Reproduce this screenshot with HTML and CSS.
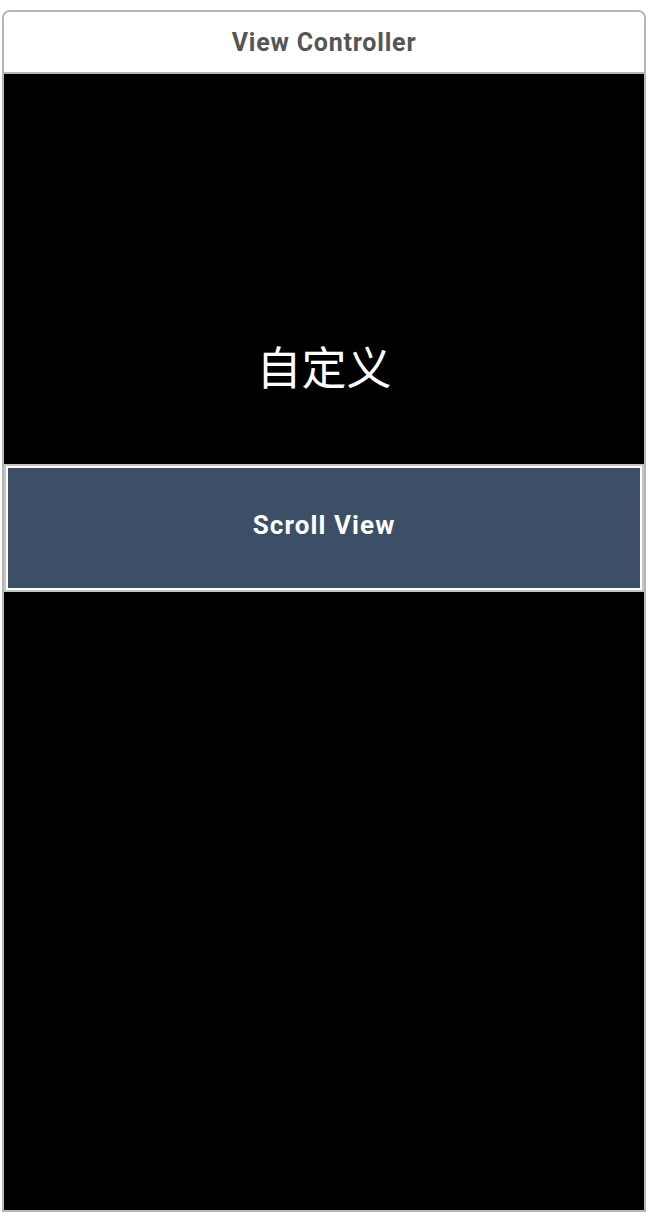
FILE: index.html
```html
<!DOCTYPE html>
<html>
<head>
<meta charset="utf-8">
<link rel="stylesheet" href="styles.css">
</head>
<body>
<div class="frame">
  <div class="header"><span class="title">View Controller</span></div>
  <div class="top-area"><span class="custom-label">自定义</span></div>
  <div class="scroll-view"><span class="scroll-label">Scroll View</span></div>
  <div class="bottom-area"></div>
</div>
</body>
</html>
```
FILE: styles.css
```css
html, body {
  margin: 0;
  padding: 0;
  background: #ffffff;
}
.frame {
  margin: 10px 2px 0 2px;
  width: 640px;
  border: 2px solid #b5b5b5;
  border-radius: 8px 8px 0 0;
  overflow: hidden;
  display: flex;
  flex-direction: column;
}
.header {
  height: 60px;
  background: #ffffff;
  border-bottom: 2px solid #b5b5b5;
  display: flex;
  align-items: center;
  justify-content: center;
}
.title {
  font-family: "Roboto", "Liberation Sans", sans-serif;
  font-weight: 700;
  font-size: 25px;
  letter-spacing: 0.8px;
  line-height: 30px;
  color: #555555;
  padding-top: 2px;
}
.top-area {
  height: 390px;
  background: #000000;
  display: flex;
  justify-content: center;
  align-items: flex-start;
  box-sizing: border-box;
  padding-top: 264px;
}
.custom-label {
  font-family: "Noto Sans CJK SC", sans-serif;
  font-size: 45px;
  line-height: 56px;
  color: #ffffff;
}
.scroll-view {
  height: 128px;
  box-sizing: border-box;
  background: #3c4f66;
  border: 2px solid #c4c4c4;
  box-shadow: inset 0 0 0 2px #ffffff;
  display: flex;
  align-items: center;
  justify-content: center;
  padding-bottom: 6px;
}
.scroll-label {
  font-family: "Roboto", "Liberation Sans", sans-serif;
  font-weight: 700;
  font-size: 26px;
  letter-spacing: 1.1px;
  color: #ffffff;
}
.bottom-area {
  height: 618px;
  background: #000000;
}
```
